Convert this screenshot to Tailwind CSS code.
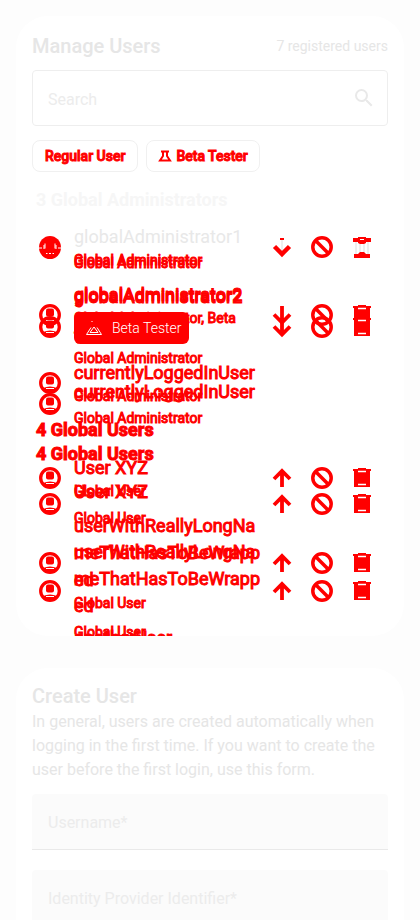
<!DOCTYPE html>
<html lang="en">
<head>
<meta charset="utf-8">
<meta name="viewport" content="width=device-width, initial-scale=1">
<title>Manage Users</title>
<script src="https://cdn.jsdelivr.net/npm/@tailwindcss/browser@4"></script>
</head>
<body class="bg-[#fdfdfd] font-[Roboto,'Liberation_Sans',sans-serif] text-[#e6e6e6] h-screen overflow-hidden">

<svg class="hidden" aria-hidden="true">
  <symbol id="person" viewBox="0 0 24 24"><circle cx="12" cy="12" r="9.300" fill="none" stroke="red" stroke-width="3.300"/><rect x="8" y="5.500" width="8" height="8" rx="2" fill="red"/><path d="M5 17Q12 14 19 17L17 21H7z" fill="red"/><path d="M8 17.500h8" stroke="#fff"/></symbol>
  <symbol id="person-mixed" viewBox="0 0 24 24"><ellipse cx="12" cy="12.500" rx="11" ry="11.500" fill="red"/><path d="M7 8.500v5M6 10v4M17 8.500v5M18 10v4M1 13h3M20 13h3M8 18.500h1.500M11 18.500h2M14.500 18.500h1.500" fill="none" stroke="#fff" stroke-width="1"/></symbol>
  <symbol id="down" viewBox="0 0 24 24"><path d="M12 3v15M4 11.500l8 8 8-8" fill="none" stroke="red" stroke-width="3.800"/></symbol>
  <symbol id="down-mixed" viewBox="0 0 24 24"><path d="M12 5v11" stroke="#eee" stroke-width="2"/><path d="M10 4h4" stroke="red" stroke-width="2"/><path d="M4.500 11.500l7.500 7.500 7.500-7.500" fill="none" stroke="red" stroke-width="4.500"/></symbol>
  <symbol id="up" viewBox="0 0 24 24"><path d="M12 21V6M4 13l8-8 8 8" fill="none" stroke="red" stroke-width="3.800"/></symbol>
  <symbol id="ban" viewBox="0 0 24 24"><circle cx="12" cy="12" r="9.200" fill="none" stroke="red" stroke-width="3.500"/><path d="M5.500 5.500l13 13" stroke="red" stroke-width="3.500"/></symbol>
  <symbol id="trash" viewBox="0 0 24 24"><path d="M3 3h5V2h8v1h5v2h-1v16H4V5H3z" fill="red"/><path d="M8 5.500h8M8 18.500h8" stroke="#fff" stroke-width="1.500"/></symbol>
  <symbol id="trash-mixed" viewBox="0 0 24 24"><path d="M6 6v13M10 6v13M14 6v13M18 6v13" stroke="#eee" stroke-width="2"/><path d="M3 3h5V2h8v1h5v4h-5v1l-2 1h-4l-2-1V7H3zM4 19h4l2-2h4l2 2h4v4H4z" fill="red"/><path d="M10 4.500h4" stroke="#fff"/></symbol>
  <symbol id="flask" viewBox="0 0 14 14"><path d="M3 2.500h8M5 3v4L2 11.500h10L9 7V3" fill="none" stroke="currentColor" stroke-width="2"/></symbol>
</svg>

<main class="flex flex-col gap-8 p-4">
  <section class="relative h-[620px] shrink-0 overflow-hidden rounded-[32px] bg-white p-4">
    <header class="flex items-center justify-between">
      <h1 class="text-xl font-medium leading-7">Manage Users</h1>
      <span class="text-sm">7 registered users</span>
    </header>
    <div class="mt-2.5 mb-3.5 flex h-14 items-center rounded border border-[#eee] px-[15px]">
      <input type="search" aria-label="Search" placeholder="Search" class="min-w-0 flex-1 bg-transparent pt-1 text-base outline-none placeholder:text-[#ececec]">
      <button aria-label="Search" class="-mr-1 flex"><svg class="size-6" viewBox="0 0 24 24" fill="#e9e9e9"><path d="M15.500 14h-.79l-.28-.27A6.470 6.470 0 0 0 16 9.500 6.500 6.500 0 1 0 9.500 16c1.610 0 3.090-.59 4.230-1.570l.27.28v.79l5 4.990L20.490 19zm-6 0a4.500 4.500 0 1 1 0-9 4.500 4.500 0 0 1 0 9z"/></svg></button>
    </div>
    <div class="flex gap-2 text-sm font-medium text-[#f00] [-webkit-text-stroke:1px_red]">
      <button class="h-8 rounded-lg border border-[#f0f0f0] px-3">Regular User</button>
      <button class="flex h-8 items-center gap-1 rounded-lg border border-[#f0f0f0] px-[11px]"><svg class="size-3.5"><use href="#flask"/></svg>Beta Tester</button>
    </div>
    <h2 class="mt-3.5 px-1 text-lg font-bold leading-7 text-[#f6f6f6]">3 Global Administrators</h2>

    <div class="mt-[9px] grid text-[#f00]">
      <!-- Compact list -->
      <div class="col-start-1 row-start-1 text-lg leading-[27px]">
        <ul class="flex flex-col gap-[11px] pr-3.5 pl-1.5">
          <li class="flex items-center">
            <svg class="mr-3 size-6"><use href="#person-mixed"/></svg>
            <div class="w-[190px]"><p class="text-[#e8e8e8]">globalAdministrator1</p><p class="text-sm leading-5 [-webkit-text-stroke:1px_red]">Global Administrator</p></div>
            <div class="ml-auto flex gap-4"><button aria-label="Demote" class="flex"><svg class="size-6"><use href="#down-mixed"/></svg></button><button aria-label="Block" class="flex"><svg class="size-6"><use href="#ban"/></svg></button><button aria-label="Delete" class="flex"><svg class="size-6"><use href="#trash-mixed"/></svg></button></div>
          </li>
          <li class="flex items-center [-webkit-text-stroke:1px_red]">
            <svg class="mr-3 size-6"><use href="#person"/></svg>
            <div class="w-[190px]"><p>globalAdministrator2</p><p class="text-sm leading-5">Global Administrator, Beta Tester</p></div>
            <div class="ml-auto flex gap-4"><button aria-label="Demote" class="flex"><svg class="size-6"><use href="#down"/></svg></button><button aria-label="Block" class="flex"><svg class="size-6"><use href="#ban"/></svg></button><button aria-label="Delete" class="flex"><svg class="size-6"><use href="#trash"/></svg></button></div>
          </li>
          <li class="flex items-center [-webkit-text-stroke:1px_red]">
            <svg class="mr-3 size-6"><use href="#person"/></svg>
            <div class="w-[190px]"><p>currentlyLoggedInUser</p><p class="text-sm leading-5">Global Administrator</p></div>
          </li>
        </ul>
        <h2 class="px-1 font-bold leading-[48px] [-webkit-text-stroke:1px_red]">4 Global Users</h2>
        <ul class="flex flex-col gap-[11px] pr-3.5 pl-1.5 [-webkit-text-stroke:1px_red]">
          <li class="flex items-center">
            <svg class="mr-3 size-6"><use href="#person"/></svg>
            <div class="w-[190px]"><p>User XYZ</p><p class="text-sm leading-5">Global User</p></div>
            <div class="ml-auto flex gap-4"><button aria-label="Promote" class="flex"><svg class="size-6"><use href="#up"/></svg></button><button aria-label="Block" class="flex"><svg class="size-6"><use href="#ban"/></svg></button><button aria-label="Delete" class="flex"><svg class="size-6"><use href="#trash"/></svg></button></div>
          </li>
          <li class="flex items-center">
            <svg class="mr-3 size-6"><use href="#person"/></svg>
            <div class="w-[190px]"><p class="break-all">userWithReallyLongNameThatHasToBeWrapped</p><p class="text-sm leading-5">Global User</p></div>
            <div class="ml-auto flex gap-4"><button aria-label="Promote" class="flex"><svg class="size-6"><use href="#up"/></svg></button><button aria-label="Block" class="flex"><svg class="size-6"><use href="#ban"/></svg></button><button aria-label="Delete" class="flex"><svg class="size-6"><use href="#trash"/></svg></button></div>
          </li>
          <li class="pl-9">anotherUser</li>
        </ul>
      </div>

      <!-- Roomy list with role chips -->
      <div class="col-start-1 row-start-1 text-lg leading-[27px]">
        <ul class="flex flex-col gap-2 pr-3.5 pl-1.5">
          <li class="pl-9"><p class="invisible">globalAdministrator1</p><p class="pt-px text-sm leading-6 [-webkit-text-stroke:1px_red]">Global Administrator</p></li>
          <li class="flex items-center">
            <svg class="mr-3 size-6"><use href="#person"/></svg>
            <div class="w-[190px]"><p class="[-webkit-text-stroke:1px_red]">globalAdministrator2</p><span class="mt-0.5 flex h-8 w-fit items-center gap-2 rounded-md bg-[#f00] px-2 pl-2.5 text-sm font-light text-white"><svg class="size-5" viewBox="0 0 20 20" fill="none" stroke="#fff"><path d="M7.500 3.500h1M7 9.500L2.500 16.500h15L13 9.500M10 9l-4 5.500h8z"/></svg>Beta Tester</span><p class="pt-0.5 text-sm leading-6 [-webkit-text-stroke:1px_red]">Global Administrator</p></div>
            <div class="ml-auto flex gap-4"><button aria-label="Demote" class="flex"><svg class="size-6"><use href="#down"/></svg></button><button aria-label="Block" class="flex"><svg class="size-6"><use href="#ban"/></svg></button><button aria-label="Delete" class="flex"><svg class="size-6"><use href="#trash"/></svg></button></div>
          </li>
          <li class="flex items-center [-webkit-text-stroke:1px_red]">
            <svg class="mr-3 size-6"><use href="#person"/></svg>
            <div class="w-[190px]"><p>currentlyLoggedInUser</p><p class="pt-px text-sm leading-6">Global Administrator</p></div>
          </li>
        </ul>
        <h2 class="px-1 font-bold leading-[48px] [-webkit-text-stroke:1px_red]">4 Global Users</h2>
        <ul class="flex flex-col gap-2 pr-3.5 pl-1.5 [-webkit-text-stroke:1px_red]">
          <li class="flex items-center">
            <svg class="mr-3 size-6"><use href="#person"/></svg>
            <div class="w-[190px]"><p>User XYZ</p><p class="pt-px text-sm leading-6">Global User</p></div>
            <div class="ml-auto flex gap-4"><button aria-label="Promote" class="flex"><svg class="size-6"><use href="#up"/></svg></button><button aria-label="Block" class="flex"><svg class="size-6"><use href="#ban"/></svg></button><button aria-label="Delete" class="flex"><svg class="size-6"><use href="#trash"/></svg></button></div>
          </li>
          <li class="flex items-center">
            <svg class="mr-3 size-6"><use href="#person"/></svg>
            <div class="w-[190px]"><p class="break-all">userWithReallyLongNameThatHasToBeWrapped</p><p class="pt-px text-sm leading-6">Global User</p></div>
            <div class="ml-auto flex gap-4"><button aria-label="Promote" class="flex"><svg class="size-6"><use href="#up"/></svg></button><button aria-label="Block" class="flex"><svg class="size-6"><use href="#ban"/></svg></button><button aria-label="Delete" class="flex"><svg class="size-6"><use href="#trash"/></svg></button></div>
          </li>
        </ul>
      </div>
    </div>
  </section>

  <section class="rounded-[32px] bg-white p-4 pb-8">
    <h2 class="text-xl font-medium leading-6">Create User</h2>
    <p class="mt-0.5 leading-6">In general, users are created automatically when logging in the first time. If you want to create the user before the first login, use this form.</p>
    <form class="mt-3 flex flex-col gap-5">
      <input aria-label="Username" placeholder="Username*" class="h-14 w-full rounded-t border-b border-[#e9e9e9] bg-[#fbfbfb] px-4 pt-0.5 outline-none placeholder:text-[#ececec]">
      <input aria-label="Identity Provider Identifier" placeholder="Identity Provider Identifier*" class="h-14 w-full rounded-t border-b border-[#e9e9e9] bg-[#fbfbfb] px-4 pt-0.5 outline-none placeholder:text-[#ececec]">
    </form>
  </section>
</main>
</body>
</html>
